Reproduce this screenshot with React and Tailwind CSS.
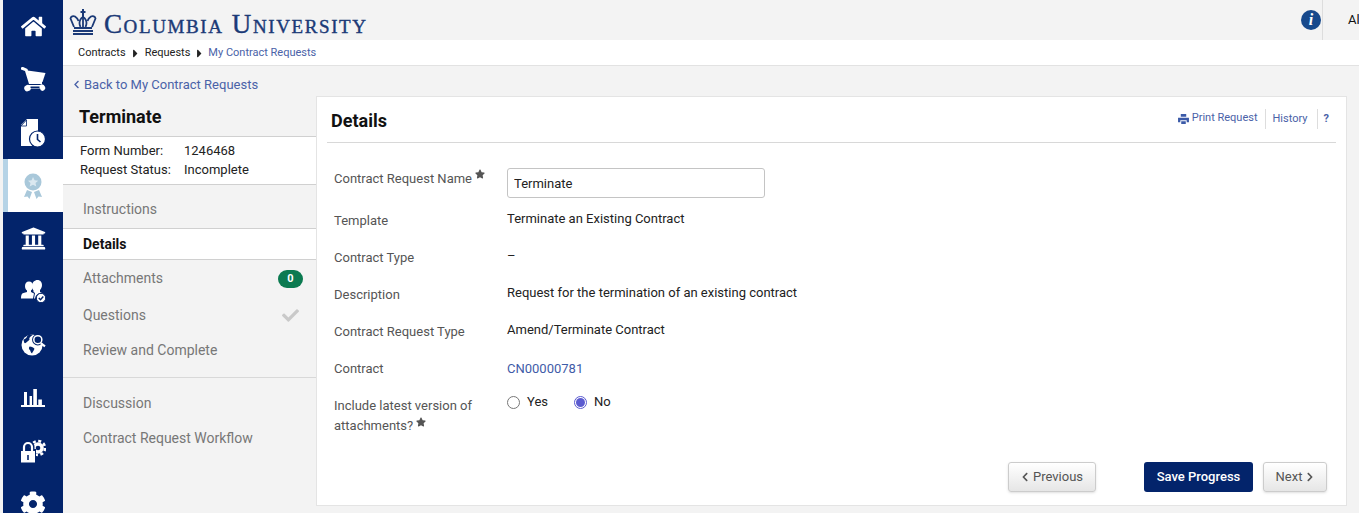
import { FaHome, FaUniversity, FaCog, FaCheck, FaChevronLeft, FaChevronRight, FaCaretRight, FaStar } from 'react-icons/fa'

const FONT = "font-['Roboto','Liberation_Sans',sans-serif]"
const NAVY = '#03246b'

function CartIcon() {
  return (
    <svg viewBox="0 0 25 25" className="w-[25px] h-[25px]" fill="#fff">
      <path d="M0 1 1 -.5l5.500 2.500 3.500 12.500h11v2.500H8L4 4 0 2.500z" />
      <path d="M6.500 3.500 24.500 6 21.500 15H9z" />
      <path d="M5 18.500a3 3 0 0 1 3-.5h11a3 3 0 0 1 4.500 1 3 3 0 0 1-2 5 3 3 0 0 1-2.500-2.500H10a3 3 0 0 1-2.500 2.500 3 3 0 0 1-2.500-5.500z" />
      <rect x="9.500" y="19.500" width="9" height="1.500" fill={NAVY} />
    </svg>
  )
}

function DocClockIcon() {
  return (
    <svg viewBox="0 0 26 28" className="w-[26px] h-[28px]" fill="#fff">
      <path d="M1 6 7 0h11v13H1z" />
      <path d="M1 7h5.500V1z" fill="#fff" stroke={NAVY} strokeWidth=".8" />
      <path d="M1 12h17v8H12v7H1z" />
      <circle cx="17.500" cy="20" r="8" stroke={NAVY} strokeWidth="1.200" />
      <path d="M17.500 15v5.500l3 2.500" fill="none" stroke={NAVY} strokeWidth="1.600" />
    </svg>
  )
}

function AwardIcon() {
  return (
    <svg viewBox="0 0 20 26" className="w-[20px] h-[26px]" fill="#a9c8da">
      <circle cx="10" cy="9" r="8.500" />
      <path d="m10 4 1.600 3.300 3.600.4-2.700 2.400.8 3.500-3.300-1.800-3.300 1.800.8-3.500L5 7.700l3.600-.4z" fill="#dbe8f0" />
      <path d="M4 17 1 24l3.500-.6L6.500 26 9 19zM16 17l3 7-3.500-.6-2 2.600L11 19z" />
    </svg>
  )
}

function UsersCheckIcon() {
  return (
    <svg viewBox="0 0 25 23" className="w-[25px] h-[23px]" fill="#fff">
      <path d="M8 1.500c2.500 0 4 2 4 4.500 0 2-.8 3.500-2 4.500v1.500l3 1.500-1 5H0c0-3.500.5-5 2.500-5.500L6 12v-1.500C4.800 9.500 4 8 4 6c0-2.500 1.500-4.500 4-4.500z" />
      <path d="M16.500 0c2.800 0 4.500 2.200 4.500 5 0 2-.8 3.800-2 5v2l2 1a6 6 0 0 0-7 5.500h-1l1-5.500-1.500-1v-1.500c-1-1-1.500-3-1.500-4.500C11 2.200 13.700 0 16.500 0z" />
      <circle cx="20" cy="18" r="4.700" stroke={NAVY} strokeWidth="1" />
      <path d="m17.800 18 1.700 1.800 2.800-3.300" fill="none" stroke={NAVY} strokeWidth="1.400" />
    </svg>
  )
}

function GlobeSearchIcon() {
  return (
    <svg viewBox="0 0 26 24" className="w-[25px] h-[23px]" fill="#fff">
      <circle cx="11.500" cy="12.500" r="11" />
      <path d="M2.500 7c3-1 4-3.500 4-4.500 2-.8 4-1 6-.8C11 3 9.500 3.500 8.500 5.500c1 1 0 2.500-1.500 3C5.500 9.500 5 11 3.500 10.500z" fill={NAVY} />
      <path d="M9 14c2 0 4.500 1 5 2.500-.5 2-2 3-2.500 5-1.500-1-1.500-3-2.500-4-1-.8-1-2.500 0-3.500z" fill={NAVY} />
      <circle cx="17.500" cy="7" r="5" fill={NAVY} stroke={NAVY} strokeWidth="2" />
      <circle cx="17.500" cy="7" r="4.200" fill={NAVY} stroke="#fff" strokeWidth="1.600" />
      <path d="m20.500 10.500 4.500 3.500" stroke="#fff" strokeWidth="2.200" />
    </svg>
  )
}

function ChartIcon() {
  return (
    <svg viewBox="0 0 24 18" className="w-[24px] h-[18px]" fill="#fff">
      <path d="M0 16h24v2H0zM3 3h3v13H3zM8.600 7h2.400v9H8.600zM12.300 0h3.600v16h-3.600zM17.300 10.500h3.600V16h-3.600z" />
    </svg>
  )
}

function LockGearIcon() {
  return (
    <svg viewBox="0 0 25 25" className="w-[25px] h-[25px]" fill="#fff">
      <circle cx="17" cy="10" r="5.800" />
      <circle cx="17" cy="10" r="7" fill="none" stroke="#fff" strokeWidth="2.600" strokeDasharray="3 2.500" />
      <circle cx="17" cy="10" r="2.300" fill={NAVY} />
      <path d="M-1 24.500V11h16v13.500z" fill={NAVY} />
      <path d="M0 13h14v11.500H0z" />
      <path d="M3 13V9a4 4 0 0 1 8 0v4" fill="none" stroke={NAVY} strokeWidth="5" />
      <path d="M3 13V9a4 4 0 0 1 8 0v4" fill="none" stroke="#fff" strokeWidth="2.200" />
      <path d="M6.200 17h1.600v5H6.200z" fill={NAVY} />
    </svg>
  )
}

function PrintIcon() {
  return (
    <svg viewBox="0 0 12 11" className="w-[11px] h-[10px] mr-[3px]" fill="#3b5aa8">
      <path d="M3 0h6v3H3zM0 4h12v5H9.500V7h-7v2H0zM3.500 8h5v3h-5z" />
    </svg>
  )
}

function Crown() {
  return (
    <svg viewBox="0 0 30 26" className="w-[30px] h-[26px] mt-[4px]" fill="none" stroke="#1b3a77" strokeWidth="1.800">
      <path d="M15 0v8M12.500 3h5" strokeWidth="2" />
      <path d="M6 18 2.500 9.500a3 3 0 0 1 4.500-2c1.500 1 3 3 3.500 4.500M24 18l3.500-8.500a3 3 0 0 0-4.500-2c-1.500 1-3 3-3.500 4.500" />
      <path d="M15 8c-2.500 1.500-3.500 4-3.500 6s.5 3 1 4M15 8c2.500 1.500 3.500 4 3.500 6s-.5 3-1 4" />
      <path d="M15 8v10M6 19h18" />
      <path d="M5 22h20M5 25h20" strokeWidth="2.200" />
    </svg>
  )
}

const NAV = [
  { key: 'home', icon: <FaHome className="text-white w-[25px] h-[25px]" /> },
  { key: 'cart', icon: <CartIcon /> },
  { key: 'docs', icon: <DocClockIcon /> },
  { key: 'contracts', icon: <AwardIcon />, active: true },
  { key: 'bank', icon: <FaUniversity className="text-white w-[25px] h-[25px]" /> },
  { key: 'users', icon: <UsersCheckIcon /> },
  { key: 'globe', icon: <GlobeSearchIcon /> },
  { key: 'chart', icon: <ChartIcon /> },
  { key: 'lock', icon: <LockGearIcon /> },
  { key: 'gear', icon: <FaCog className="text-white w-[26px] h-[26px]" /> },
]

const FIELDS = [
  { label: 'Template', value: 'Terminate an Existing Contract' },
  { label: 'Contract Type', value: '–' },
  { label: 'Description', value: 'Request for the termination of an existing contract' },
  { label: 'Contract Request Type', value: 'Amend/Terminate Contract' },
]

function Sidebar() {
  return (
    <div className="w-[63px] shrink-0 pl-[3px] bg-[#f3f3f3]">
      <div className="bg-[#03246b] h-full w-[60px]">
        {NAV.map(n => (
          <div key={n.key}
            className={`h-[53px] flex items-center justify-center ${n.active ? 'bg-white border-l-[5px] border-[#b5d3e6] pr-[5px]' : ''}`}>
            {n.icon}
          </div>
        ))}
      </div>
    </div>
  )
}

function SideMenu() {
  return (
    <div className="w-[253px] shrink-0 pt-[1px] text-sm text-[#777]">
      <h1 className="h-[39px] pl-[16px] flex items-center text-[18px] font-bold text-[#111]">Terminate</h1>
      <div className="bg-white border-y border-[#d0d0d0] h-[49px] pl-[17px] pt-[4px] text-[13px] leading-[19px] text-[#222]">
        <div className="flex"><span className="w-[104px]">Form Number:</span><span>1246468</span></div>
        <div className="flex"><span className="w-[104px]">Request Status:</span><span>Incomplete</span></div>
      </div>
      <div className="h-[43px] pl-[20px] pt-[4px] flex items-center">Instructions</div>
      <div className="h-[32px] pl-[20px] flex items-center bg-white border-y border-[#d0d0d0] font-bold text-[#111]">Details</div>
      <div className="h-[37px] pl-[20px] pr-[13px] flex items-center justify-between">
        <span className="-mt-[2px]">Attachments</span>
        <span className="w-[25px] h-[18px] rounded-full bg-[#0b7a50] text-white text-[11px] font-bold flex items-center justify-center">0</span>
      </div>
      <div className="h-[36px] pl-[20px] pr-[17px] flex items-center justify-between">
        Questions
        <FaCheck className="w-[17px] h-[17px] text-[#c9c9c9]" />
      </div>
      <div className="h-[34px] pl-[20px] flex items-center">Review and Complete</div>
      <div className="h-[11px] border-b border-[#d8d8d8]" />
      <div className="h-[50px] pl-[20px] flex items-center">Discussion</div>
      <div className="h-[20px] pl-[20px] flex items-center">Contract Request Workflow</div>
    </div>
  )
}

function DetailsCard() {
  return (
    <div className="flex-1 bg-white border border-[#e4e4e4] h-[410px] px-[10px] flex flex-col">
      <div className="h-[46px] border-b border-[#d8d8d8] flex items-center justify-between pl-[4px] pr-[7px]">
        <h2 className="text-[18px] font-bold text-[#111] mt-[2px]">Details</h2>
        <div className="flex items-center text-[11px] text-[#4a62a8] mt-[-2px]">
          <PrintIcon />
          <span>Print Request</span>
          <span className="border-l border-[#ddd] ml-[7px] pl-[7px] leading-[20px]">History</span>
          <span className="border-l border-[#ddd] ml-[9px] pl-[6px] leading-[20px] font-bold">?</span>
        </div>
      </div>

      <div className="pl-[7px] pt-[25px] text-[13px] text-[#555]">
        <div className="flex h-[46px]">
          <div className="w-[173px] pt-[1px] flex items-start">
            Contract Request Name
            <FaStar className="w-[10px] h-[10px] ml-[3px] text-[#555]" />
          </div>
          <input readOnly value="Terminate"
            className="w-[258px] h-[30px] border border-[#c4c4c4] rounded-[3px] px-[6px] text-[13px] text-[#222] bg-white" />
        </div>
        {FIELDS.map(f => (
          <div key={f.label} className="flex h-[37px]">
            <div className="w-[173px] leading-[14px]">{f.label}</div>
            <div className="text-[#222] leading-[14px] -mt-[2px]">{f.value}</div>
          </div>
        ))}
        <div className="flex h-[37px]">
          <div className="w-[173px] leading-[14px]">Contract</div>
          <div className="text-[#3f5ca8] leading-[14px]">CN00000781</div>
        </div>
        <div className="flex -mt-[3px]">
          <div className="w-[173px] leading-[20px]">
            Include latest version of
            <div className="flex items-start">attachments?<FaStar className="w-[10px] h-[10px] ml-[3px] mt-[1px] text-[#555]" /></div>
          </div>
          <div className="flex items-center h-[14px] -mt-[1px] text-[#222]">
            <span className="w-[13px] h-[13px] rounded-full border border-[#777] bg-white mr-[7px]" />
            <span>Yes</span>
            <span className="w-[13px] h-[13px] rounded-full border border-[#5b5bd0] bg-white ml-[26px] mr-[7px] flex items-center justify-center">
              <span className="w-[9px] h-[9px] rounded-full bg-[#5b5bd0]" />
            </span>
            <span>No</span>
          </div>
        </div>
      </div>

      <div className="flex items-center justify-end text-[13px] mt-auto mb-[13px] pr-[9px]">
        <button className="w-[88px] h-[30px] mr-[48px] rounded-[3px] border border-[#ccc] bg-gradient-to-b from-white to-[#e6e6e6] text-[#555] flex items-center justify-center shadow-sm">
          <FaChevronLeft className="w-[8px] h-[10px] mr-[4px]" />Previous
        </button>
        <button className="w-[109px] h-[30px] mr-[10px] rounded-[3px] bg-[#03246b] text-white font-medium">Save Progress</button>
        <button className="w-[64px] h-[30px] rounded-[3px] border border-[#ccc] bg-gradient-to-b from-white to-[#e6e6e6] text-[#555] flex items-center justify-center shadow-sm">
          Next<FaChevronRight className="w-[8px] h-[10px] ml-[4px]" />
        </button>
      </div>
    </div>
  )
}

export default function App() {
  return (
    <div className={`flex h-screen overflow-hidden bg-[#f3f3f3] ${FONT}`}>
      <Sidebar />
      <div className="flex-1 min-w-0 flex flex-col">
        <div className="h-[40px] pl-[5px] flex items-center justify-between shrink-0">
          <div className="flex items-center">
            <Crown />
            <span className="ml-[6px] mt-[8px] font-['Liberation_Serif',serif] text-[27px] leading-none text-[#1b3a77] tracking-[1.6px] [font-variant:small-caps] [-webkit-text-stroke:0.4px_#1b3a77]">Columbia University</span>
          </div>
          <div className="flex items-center h-full">
            <span className="w-[20px] h-[20px] rounded-full bg-[#17498c] flex items-center justify-center font-['Liberation_Serif',serif] italic font-bold text-[16px] leading-none text-white">i</span>
            <div className="ml-[1px] h-full border-l border-[#ddd] pl-[25px] w-[37px] overflow-hidden text-[13px] leading-[40px] text-[#111]">Al</div>
          </div>
        </div>

        <div className="h-[26px] bg-white border-b border-[#e2e2e2] pl-[15px] pt-[2px] flex items-center text-[11px] text-[#222] shrink-0">
          Contracts
          <FaCaretRight className="w-[13px] h-[13px] mx-[3px]" />
          Requests
          <FaCaretRight className="w-[13px] h-[13px] mx-[3px]" />
          <span className="text-[#4a62a8] -ml-[1px]">My Contract Requests</span>
        </div>

        <div className="h-[30px] pl-[10px] pt-[7px] flex items-center text-[13px] text-[#4a62a8] shrink-0">
          <FaChevronLeft className="w-[7px] h-[9px] mr-[4px]" />
          Back to My Contract Requests
        </div>

        <div className="flex pr-[12px]">
          <SideMenu />
          <DetailsCard />
        </div>
      </div>
    </div>
  )
}
